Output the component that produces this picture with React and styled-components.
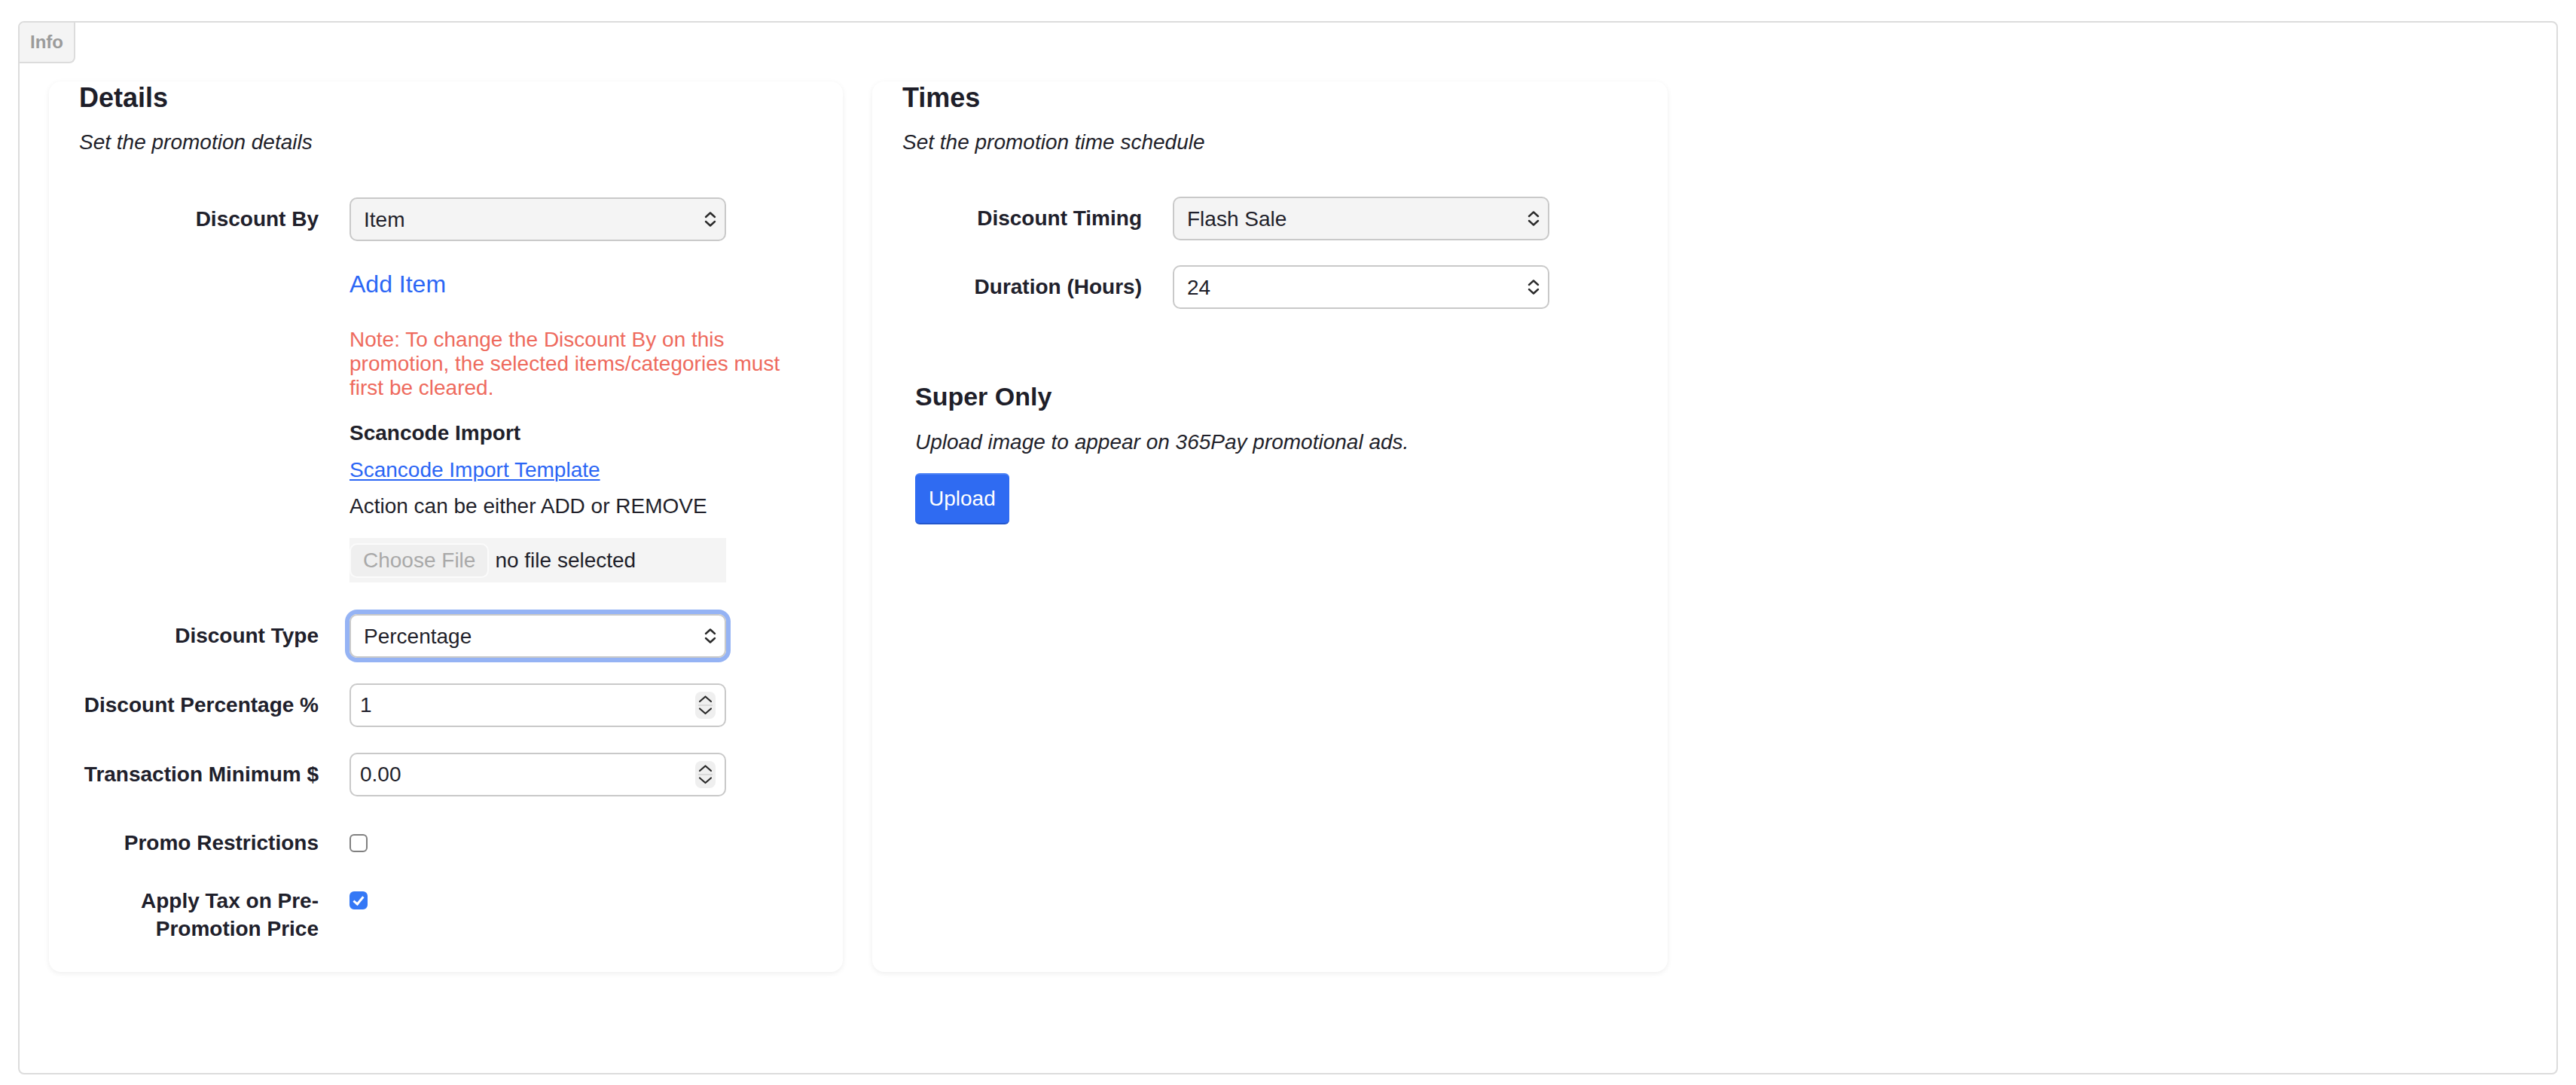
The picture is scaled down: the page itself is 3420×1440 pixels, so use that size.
import React from 'react';
import styled, { createGlobalStyle } from 'styled-components';

const GlobalStyle = createGlobalStyle`
  html, body {
    margin: 0;
    padding: 0;
    background: #ffffff;
  }
  body {
    font-family: "Liberation Sans", Arial, Helvetica, sans-serif;
    color: #1f1f2a;
  }
  * {
    box-sizing: border-box;
  }
`

const Page = styled.div`
  padding: 28px 24px 14px;
`

const Panel = styled.div`
  height: 1398px;
  border: 2px solid #dcdcdc;
  border-radius: 8px;
`

const Tab = styled.div`
  width: 74px;
  height: 54px;
  padding-left: 14px;
  background: #f4f4f4;
  border-right: 2px solid #dcdcdc;
  border-bottom: 2px solid #dcdcdc;
  border-top-left-radius: 6px;
  border-bottom-right-radius: 8px;
  color: #9b9b9b;
  font-size: 24px;
  font-weight: 700;
  line-height: 52px;
`

const Cards = styled.div`
  display: flex;
  align-items: stretch;
  gap: 39px;
  padding: 24px 39px 0;
`

const Card = styled.section`
  width: ${p => p.width}px;
  padding: 0 40px 39px;
  border-radius: 16px;
  background: #fff;
  box-shadow: 0 2px 7px rgba(0, 0, 0, 0.07);
`

const Heading = styled.h2`
  margin: 0;
  font-size: 36px;
  line-height: 43px;
  font-weight: 700;
  color: #1e1e29;
`

const Subtitle = styled.p`
  margin: ${p => p.mt || 21}px 0 0;
  font-size: 28px;
  line-height: 34px;
  font-style: italic;
  color: #1f1f2a;
`

const Row = styled.div`
  display: flex;
  align-items: ${p => (p.top ? 'flex-start' : 'center')};
  margin-top: ${p => p.mt}px;
`

const Label = styled.label`
  flex-shrink: 0;
  width: 318px;
  margin-right: 41px;
  padding-top: ${p => p.pt || 0}px;
  text-align: right;
  font-size: 28px;
  font-weight: 700;
  line-height: ${p => p.lh || 36}px;
  color: #20202b;
`

const Field = styled.div`
  width: 600px;
  display: flex;
  flex-direction: column;
  align-items: flex-start;
`

const ControlWrap = styled.div`
  position: relative;
  width: 500px;
  height: 58px;
  border-radius: 10px;
  box-shadow: ${p => (p.focused ? '0 0 0 6px #95b3f4' : 'none')};
`

const Select = styled.select`
  appearance: none;
  -webkit-appearance: none;
  width: 100%;
  height: 100%;
  padding: 0 50px 0 17px;
  border: 2px solid #c9c9c9;
  border-radius: 10px;
  background: ${p => (p.muted ? '#f4f4f4' : '#ffffff')};
  font-family: inherit;
  font-size: 28px;
  color: #1f1f2a;
  outline: none;
`

const NumberInput = styled.input`
  width: 100%;
  height: 100%;
  padding: 0 50px 0 12px;
  border: 2px solid #c9c9c9;
  border-radius: 10px;
  background: #fff;
  font-family: inherit;
  font-size: 28px;
  color: #1f1f2a;
  outline: none;
  -moz-appearance: textfield;
  &::-webkit-inner-spin-button,
  &::-webkit-outer-spin-button {
    -webkit-appearance: none;
    margin: 0;
  }
`

const Chevrons = styled.svg`
  position: absolute;
  right: 13px;
  top: 50%;
  transform: translateY(-50%);
  pointer-events: none;
`

const Stepper = styled.svg`
  position: absolute;
  right: 14px;
  top: 50%;
  transform: translateY(-50%);
  border-radius: 8px;
  background: #efefef;
  pointer-events: none;
`

const AddLink = styled.a`
  margin-top: 38px;
  font-size: 32px;
  line-height: 38px;
  color: #2b66f5;
  text-decoration: none;
  cursor: pointer;
`

const Note = styled.p`
  margin: 39px 0 0;
  font-size: 28px;
  line-height: 32px;
  color: #ee6a5d;
`

const SubHeading = styled.div`
  margin-top: 27px;
  font-size: 28px;
  font-weight: 700;
  line-height: 34px;
  color: #1f1f2a;
`

const TemplateLink = styled.a`
  margin-top: 15px;
  font-size: 28px;
  line-height: 34px;
  color: #2b66f5;
  text-decoration: underline;
  text-underline-offset: 3px;
  text-decoration-thickness: 2px;
  cursor: pointer;
`

const Text = styled.div`
  margin-top: 14px;
  font-size: 28px;
  line-height: 34px;
  color: #1f1f2a;
`

const FileBox = styled.label`
  display: flex;
  align-items: center;
  gap: 8px;
  width: 500px;
  height: 59px;
  margin-top: 25px;
  background: #f4f4f4;
  font-size: 28px;
  color: #1f1f2a;
`

const FileButton = styled.span`
  display: flex;
  align-items: center;
  height: 46px;
  padding: 0 16px;
  border: 2px solid #fbfbfb;
  border-radius: 10px;
  background: #efefef;
  color: #a9a9a9;
`

const Checkbox = styled.input`
  appearance: none;
  -webkit-appearance: none;
  position: relative;
  flex-shrink: 0;
  width: 24px;
  height: 24px;
  margin: ${p => p.mt || 0}px 0 0;
  border: 2.5px solid #808080;
  border-radius: 6px;
  background: #fff;
  &:checked {
    border-color: #3478f6;
    background: #3478f6;
  }
  &:checked::after {
    content: '';
    position: absolute;
    left: 6px;
    top: 2px;
    width: 5px;
    height: 11px;
    border: solid #fff;
    border-width: 0 3px 3px 0;
    transform: rotate(40deg);
  }
`

const SuperSection = styled.div`
  margin-top: 96px;
  padding-left: 17px;
`

const SectionTitle = styled.h3`
  margin: 0;
  font-size: 34px;
  line-height: 40px;
  font-weight: 700;
  color: #1e1e29;
`

const UploadButton = styled.button`
  height: 68px;
  margin-top: 24px;
  padding: 0 18px;
  border: none;
  border-top: 2px solid #4a80f5;
  border-bottom: 2px solid #2356cc;
  border-radius: 6px;
  background: #2f6bf2;
  font-family: inherit;
  font-size: 28px;
  color: #fff;
  cursor: pointer;
`

function SelectBox({ value, options, muted, focused }) {
  return (
    <ControlWrap focused={focused}>
      <Select muted={muted} defaultValue={value}>
        {options.map(o => <option key={o}>{o}</option>)}
      </Select>
      <Chevrons width="16" height="22" viewBox="0 0 16 22">
        <polyline points="2,8 8,2.5 14,8" fill="none" stroke="#2a2a2a" strokeWidth="2.4" strokeLinecap="round" strokeLinejoin="round" />
        <polyline points="2,14 8,19.5 14,14" fill="none" stroke="#2a2a2a" strokeWidth="2.4" strokeLinecap="round" strokeLinejoin="round" />
      </Chevrons>
    </ControlWrap>
  );
}

function NumberBox({ value }) {
  return (
    <ControlWrap>
      <NumberInput type="number" defaultValue={value} />
      <Stepper width="27" height="36" viewBox="0 0 27 36">
        <polyline points="6,13 13.5,6.5 21,13" fill="none" stroke="#2a2a2a" strokeWidth="2.2" strokeLinecap="round" strokeLinejoin="round" />
        <line x1="4" y1="18" x2="23" y2="18" stroke="#d2d2d2" strokeWidth="1.5" />
        <polyline points="6,22.5 13.5,29 21,22.5" fill="none" stroke="#2a2a2a" strokeWidth="2.2" strokeLinecap="round" strokeLinejoin="round" />
      </Stepper>
    </ControlWrap>
  );
}

export default function App() {
  return (
    <Page>
      <GlobalStyle />
      <Panel>
        <Tab>Info</Tab>
        <Cards>
          <Card width={1054}>
            <Heading>Details</Heading>
            <Subtitle>Set the promotion details</Subtitle>

            <Row top mt={56}>
              <Label pt={11}>Discount By</Label>
              <Field>
                <SelectBox value="Item" options={['Item', 'Category']} muted />
                <AddLink>Add Item</AddLink>
                <Note>
                  Note: To change the Discount By on this promotion, the selected items/categories must first be cleared.
                </Note>
                <SubHeading>Scancode Import</SubHeading>
                <TemplateLink>Scancode Import Template</TemplateLink>
                <Text>Action can be either ADD or REMOVE</Text>
                <FileBox>
                  <FileButton>Choose File</FileButton>
                  no file selected
                </FileBox>
              </Field>
            </Row>

            <Row mt={42}>
              <Label>Discount Type</Label>
              <Field>
                <SelectBox value="Percentage" options={['Percentage', 'Amount']} focused />
              </Field>
            </Row>

            <Row mt={34}>
              <Label>Discount Percentage %</Label>
              <Field>
                <NumberBox value="1" />
              </Field>
            </Row>

            <Row mt={34}>
              <Label>Transaction Minimum $</Label>
              <Field>
                <NumberBox value="0.00" />
              </Field>
            </Row>

            <Row mt={44}>
              <Label>Promo Restrictions</Label>
              <Checkbox type="checkbox" />
            </Row>

            <Row top mt={40}>
              <Label lh={37}>Apply Tax on Pre-Promotion Price</Label>
              <Checkbox type="checkbox" defaultChecked mt={6} />
            </Row>
          </Card>

          <Card width={1056}>
            <Heading>Times</Heading>
            <Subtitle>Set the promotion time schedule</Subtitle>

            <Row mt={55}>
              <Label>Discount Timing</Label>
              <Field>
                <SelectBox value="Flash Sale" options={['Flash Sale', 'Scheduled']} muted />
              </Field>
            </Row>

            <Row mt={33}>
              <Label>Duration (Hours)</Label>
              <Field>
                <SelectBox value="24" options={['12', '24', '48', '72']} />
              </Field>
            </Row>

            <SuperSection>
              <SectionTitle>Super Only</SectionTitle>
              <Subtitle mt={24}>Upload image to appear on 365Pay promotional ads.</Subtitle>
              <UploadButton>Upload</UploadButton>
            </SuperSection>
          </Card>
        </Cards>
      </Panel>
    </Page>
  );
}
